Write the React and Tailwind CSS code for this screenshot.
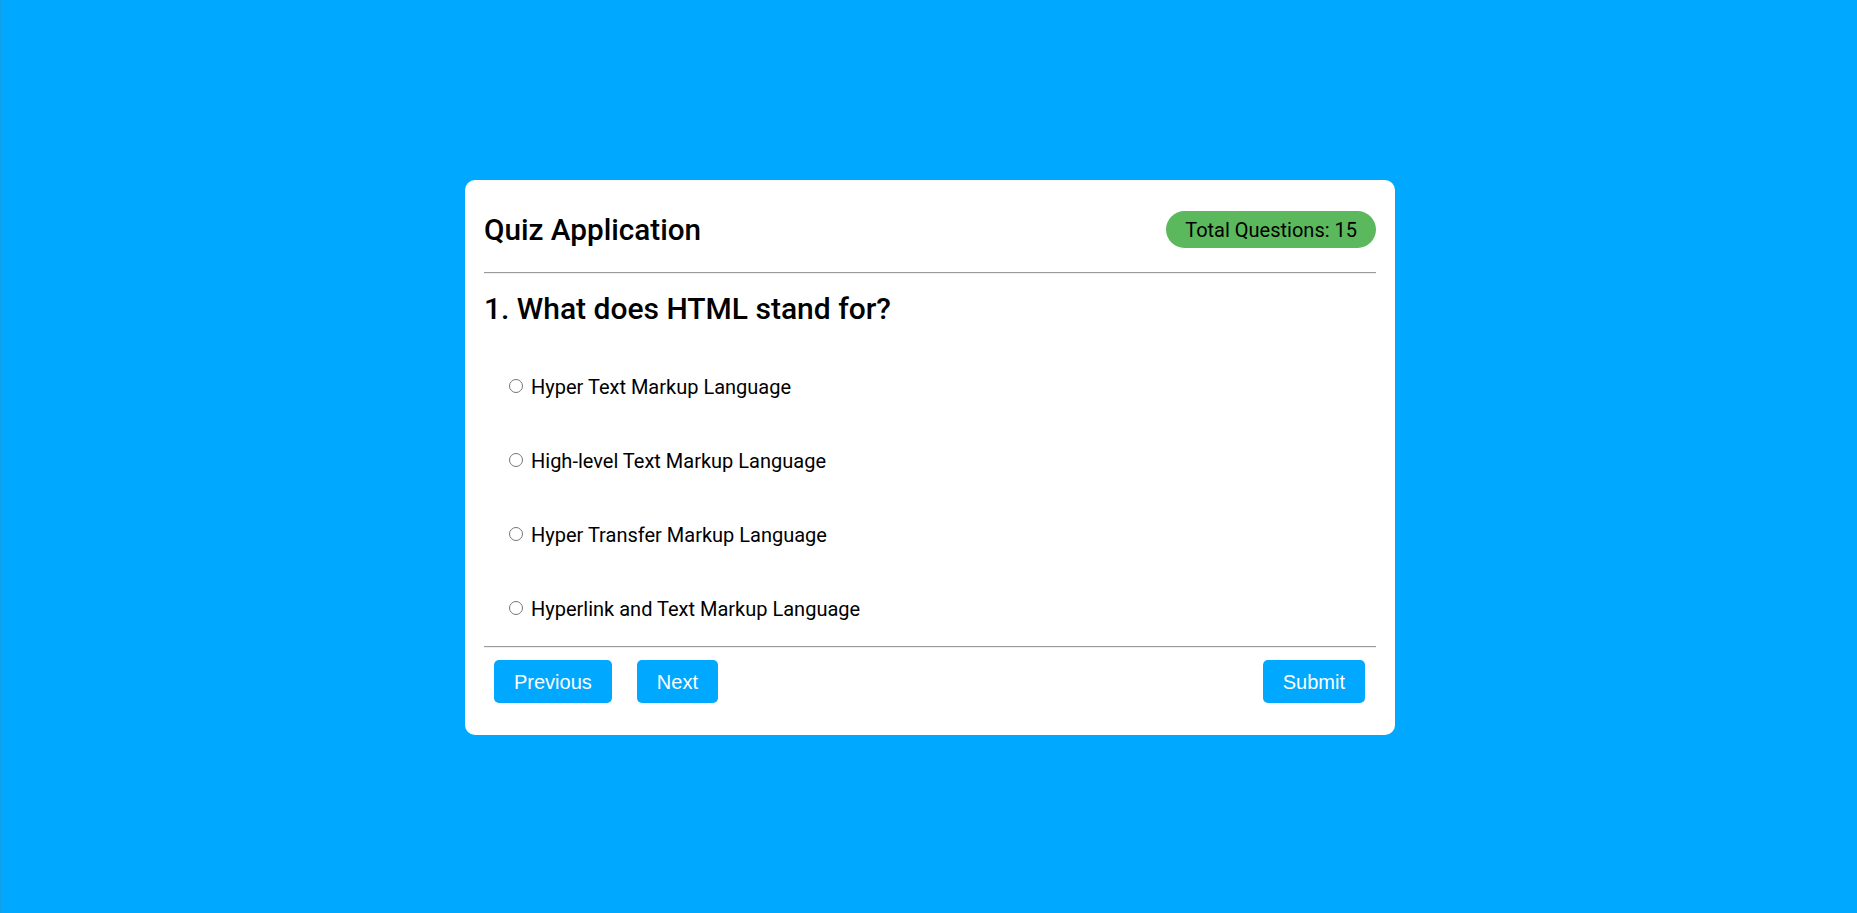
import React, { useState } from "react";

const options = [
  "Hyper Text Markup Language",
  "High-level Text Markup Language",
  "Hyper Transfer Markup Language",
  "Hyperlink and Text Markup Language",
];

export default function App() {
  const [picked, setPicked] = useState(null);

  return (
    <div className="min-h-screen w-full bg-[#00a8ff] border-l border-l-[#139de6] pl-[2px] pt-[2px] flex items-center justify-center font-['Roboto',sans-serif] text-black">
      <div className="w-[930px] bg-white rounded-[10px] px-[19px] pt-[20px] pb-[32px]">
        <div className="h-[59px] flex items-center justify-between">
          <h1 className="text-[29.7px] leading-[1.2] font-medium">Quiz Application</h1>
          <div className="h-[37px] px-[19px] rounded-full bg-[#5cb85c] flex items-center text-[20px]">
            Total Questions: 15
          </div>
        </div>

        <div className="mt-[13px] border-t border-t-[#9a9a9a] border-b border-b-[#eeeeee]" />

        <h2 className="mt-[17px] text-[30px] leading-[35px] font-medium">1. What does HTML stand for?</h2>

        <div className="mt-[24px]">
          {options.map((opt, i) => (
            <label key={i} className="flex items-center h-[74px] pl-[25px] text-[20px] leading-[23px] cursor-pointer">
              <input
                type="radio"
                name="q1"
                checked={picked === i}
                onChange={() => setPicked(i)}
                className="m-0 w-[14px] h-[14px] -translate-y-[1px]"
              />
              <span className="ml-[8px]">{opt}</span>
            </label>
          ))}
        </div>

        <div className="border-t border-t-[#9a9a9a] border-b border-b-[#eeeeee]" />

        <div className="mt-[12px] flex items-center gap-[25px] px-[10px] font-['Liberation_Sans',Arial,sans-serif] text-[20px] text-white">
          <button className="h-[43px] px-[20px] rounded-[5px] bg-[#00a8ff]">Previous</button>
          <button className="h-[43px] px-[20px] rounded-[5px] bg-[#00a8ff]">Next</button>
          <button className="ml-auto mr-[1px] h-[43px] px-[20px] rounded-[5px] bg-[#00a8ff]">Submit</button>
        </div>
      </div>
    </div>
  );
}
